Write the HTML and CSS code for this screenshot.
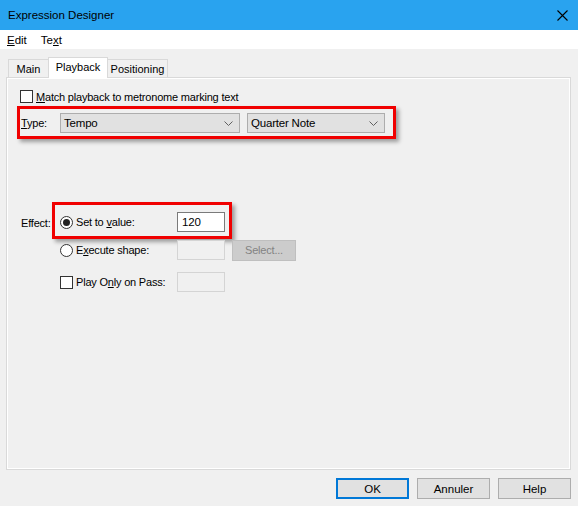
FILE: index.html
```html
<!DOCTYPE html>
<html>
<head>
<meta charset="utf-8">
<title>Expression Designer</title>
<link rel="stylesheet" href="styles.css">
</head>
<body>
<div class="window">
  <header class="titlebar">
    <span class="title">Expression Designer</span>
    <svg class="close" width="11" height="11" viewBox="0 0 11 11"><path d="M0.5 0.5 L10.5 10.5 M10.5 0.5 L0.5 10.5" stroke="#000" stroke-width="1.1" fill="none"/></svg>
  </header>
  <nav class="menubar">
    <span class="menu"><u>E</u>dit</span>
    <span class="menu">Te<u>x</u>t</span>
  </nav>
  <main class="client">
    <div class="tabs">
      <div class="tab tab-main">Main</div>
      <div class="tab tab-active">Playback</div>
      <div class="tab tab-pos">Positioning</div>
    </div>
    <section class="panel">
      <div class="check-row">
        <span class="checkbox"></span>
        <span class="check-label"><u>M</u>atch playback to metronome marking text</span>
      </div>
      <div class="highlight type-row">
        <span class="type-label"><u>T</u>ype:</span>
        <div class="select sel-type">
          <span>Tempo</span>
          <svg class="chev" width="9" height="5" viewBox="0 0 9 5"><path d="M0.5 0.5 L4.5 4.5 L8.5 0.5" stroke="#606060" fill="none"/></svg>
        </div>
        <div class="select sel-note">
          <span>Quarter Note</span>
          <svg class="chev" width="9" height="5" viewBox="0 0 9 5"><path d="M0.5 0.5 L4.5 4.5 L8.5 0.5" stroke="#606060" fill="none"/></svg>
        </div>
      </div>
      <div class="effect">
        <span class="effect-label">Effect:</span>
        <div class="options">
          <div class="highlight opt-box">
            <div class="opt">
              <span class="radio checked"></span>
              <span class="opt-label">Set to <u>v</u>alue:</span>
              <span class="field">120</span>
            </div>
          </div>
          <div class="opt indent row2">
            <span class="radio"></span>
            <span class="opt-label">E<u>x</u>ecute shape:</span>
            <span class="field disabled"></span>
            <span class="btn-disabled">Select...</span>
          </div>
          <div class="opt indent row3">
            <span class="checkbox"></span>
            <span class="opt-label">Play O<u>n</u>ly on Pass:</span>
            <span class="field disabled"></span>
          </div>
        </div>
      </div>
    </section>
    <div class="buttons">
      <span class="button default">OK</span>
      <span class="button">Annuler</span>
      <span class="button">Help</span>
    </div>
  </main>
</div>
</body>
</html>
```
FILE: styles.css
```css
* { box-sizing: border-box; }
html, body { margin: 0; padding: 0; }
body {
  background: #f0f0f0;
  font-family: "Liberation Sans", Arial, sans-serif;
  font-size: 11px;
  color: #000;
}
.window { width: 578px; height: 506px; overflow: hidden; }

.titlebar {
  height: 30px;
  background: #29a3ef;
  display: flex;
  align-items: center;
  justify-content: space-between;
  padding: 0 10px 0 8px;
}
.title { font-size: 11.5px; }
.close { display: block; }

.menubar {
  height: 19px;
  background: #fff;
  display: flex;
  align-items: center;
  padding-left: 7px;
  font-size: 11.5px;
}
.menu { margin-right: 14px; }

.client { padding: 8px 0 0 6px; }

.tabs {
  display: flex;
  align-items: flex-end;
  margin-left: 2px;
  height: 21px;
  margin-bottom: -1px;
  position: relative;
  z-index: 1;
}
.tab {
  border: 1px solid #d9d9d9;
  border-bottom: none;
  background: #f0f0f0;
  height: 18px;
  margin-bottom: 1px;
  display: flex;
  align-items: center;
  justify-content: center;
  padding-top: 1px;
}
.tab-main { width: 41px; }
.tab-active {
  width: 60px;
  height: 21px;
  margin-bottom: 0;
  margin-left: -1px;
  background: #fff;
  padding-top: 0;
  padding-bottom: 2px;
}
.tab-pos { width: 61px; margin-left: -1px; }

.panel {
  width: 565px;
  height: 393px;
  border: 1px solid #d9d9d9;
  box-shadow: inset 0 0 0 1px #fff;
  padding: 12px 0 0 10px;
  letter-spacing: -0.2px;
}

.check-row {
  display: flex;
  align-items: center;
  margin-left: 3px;
  height: 13px;
}
.checkbox {
  width: 13px;
  height: 13px;
  border: 1px solid #333;
  background: #fff;
  flex: none;
}
.check-label { margin-left: 3px; }

.highlight {
  border: 3px solid #f00000;
  box-shadow: 3px 3px 4px rgba(0, 0, 0, 0.35);
}

.type-row {
  margin-top: 3px;
  width: 379px;
  display: flex;
  align-items: center;
  padding: 4px 0 3px 1px;
}
.type-label { width: 39px; }
.select {
  height: 20px;
  background: #e1e1e1;
  border: 1px solid #adadad;
  display: flex;
  align-items: center;
  justify-content: space-between;
  padding: 0 6px 0 3px;
  font-size: 11.5px;
}
.sel-type { width: 180px; }
.sel-note { width: 138px; margin-left: 7px; }
.chev { display: block; }

.effect {
  display: flex;
  margin-top: 63px;
  margin-left: 4px;
}
.effect-label { width: 31px; padding-top: 15px; }
.options { display: flex; flex-direction: column; }

.opt-box {
  width: 180px;
  padding: 7px 4px 4px 5px;
}
.opt {
  display: flex;
  align-items: center;
  height: 20px;
}
.indent { margin-left: 8px; }
.row2 { margin-top: 1px; }
.row3 { margin-top: 12px; }

.radio {
  width: 13px;
  height: 13px;
  border: 1px solid #333;
  border-radius: 50%;
  background: #fff;
  flex: none;
  display: flex;
  align-items: center;
  justify-content: center;
}
.radio.checked::after {
  content: "";
  width: 7px;
  height: 7px;
  border-radius: 50%;
  background: #222;
}
.opt-label { width: 101px; margin-left: 3px; }
.field {
  width: 48px;
  height: 20px;
  border: 1px solid #7a7a7a;
  background: #fff;
  padding: 0 4px;
  display: flex;
  align-items: center;
  font-size: 11.5px;
}
.field.disabled { border-color: #d4d4d4; background: #f0f0f0; }
.btn-disabled {
  width: 64px;
  height: 21px;
  margin-left: 7px;
  background: #cccccc;
  border: 1px solid #bfbfbf;
  color: #838383;
  display: flex;
  align-items: center;
  justify-content: center;
}

.buttons {
  display: flex;
  justify-content: flex-end;
  gap: 8px;
  padding-right: 7px;
  margin-top: 8px;
}
.button {
  width: 73px;
  height: 21px;
  background: #e1e1e1;
  border: 1px solid #adadad;
  display: flex;
  align-items: center;
  justify-content: center;
  font-size: 11.5px;
}
.button.default { border: 2px solid #0078d7; }
```
